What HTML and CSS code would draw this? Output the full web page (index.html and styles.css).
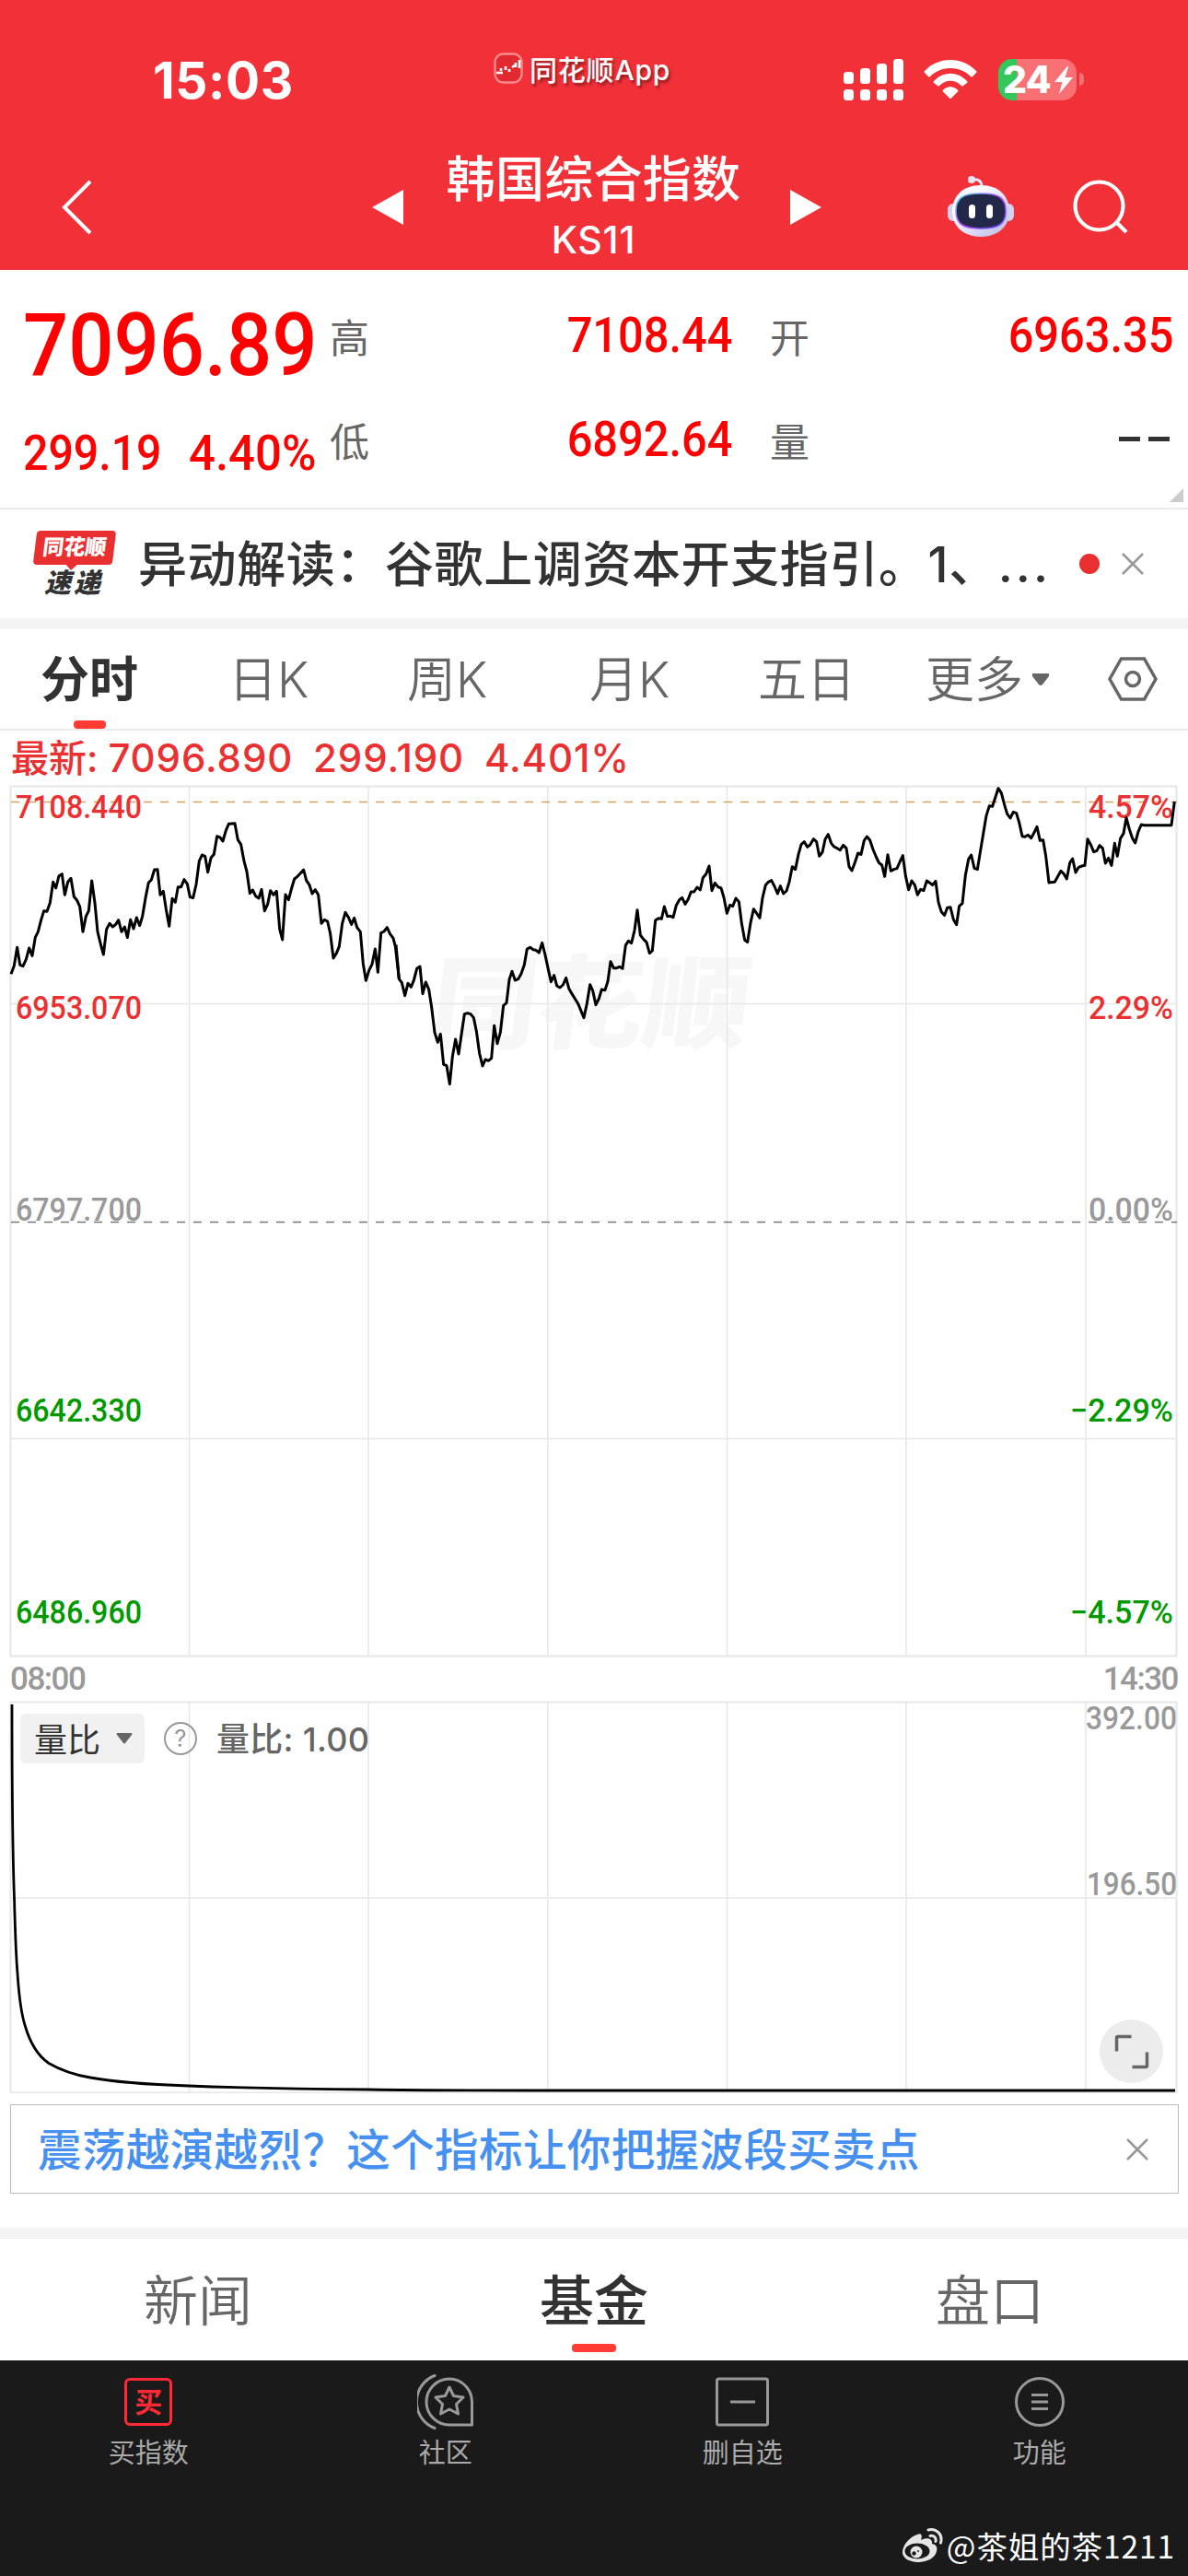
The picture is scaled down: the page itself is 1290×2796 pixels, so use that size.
FILE: index.html
```html
<!DOCTYPE html>
<html lang="zh-CN">
  <head>
    <meta charset="UTF-8" />
    <meta name="viewport" content="width=device-width, initial-scale=1.0" />
    <title>韩国综合指数 KS11</title>
    <link rel="stylesheet" href="styles.css">
  </head>
  <body>
    <header class="header">
      <div class="status-bar">
        <div class="clock">15:03</div>
        <div class="app-tag">
          <svg width="32" height="34" viewBox="0 0 32 34">
            <rect x="1.5" y="1.5" width="29" height="31" rx="9" fill="#e02a30" stroke="#fa8a8c" stroke-width="2.4" />
            <path d="M3 22h7M8 17v3M13 15v4M17 18v3M20 16l3-2M24 11v5M28 8v9" stroke="#fff" stroke-width="2.6" fill="none" />
          </svg>
          <span class="app-name">同花顺App</span>
        </div>
        <div class="status-icons">
          <svg width="66" height="46" viewBox="0 0 66 46" fill="#fff">
            <rect x="0" y="14" width="11" height="13" rx="3.5" />
            <rect x="18" y="10" width="11" height="17" rx="3.5" />
            <rect x="36" y="5" width="11" height="22" rx="3.5" />
            <rect x="54" y="0" width="11" height="27" rx="3.5" />
            <rect x="0" y="33" width="11" height="12" rx="3.5" />
            <rect x="18" y="33" width="11" height="12" rx="3.5" />
            <rect x="36" y="33" width="11" height="12" rx="3.5" />
            <rect x="54" y="33" width="11" height="12" rx="3.5" />
          </svg>
          <svg class="wifi" width="58" height="46" viewBox="0 0 58 46" fill="#fff">
            <path d="M1 13C16-3 42-3 57 13q1 1 0 2l-4 4q-1 1-2 0C39 7 19 7 7 19q-1 1-2 0l-4-4q-1-1 0-2z" />
            <path d="M11 24C21 13 37 13 47 24q1 1 0 2l-4 3q-1 1-2 0C34 22 24 22 17 29q-1 1-2 0l-4-3q-1-1 0-2z" />
            <path d="M21 33.500Q29 26.500 37 33.500q1 1 0 2L30 42.500q-1 1-2 0L21 35.500q-1-1 0-2z" />
          </svg>
          <div class="battery">
            <span>24</span>
            <svg width="20" height="30" viewBox="0 0 20 30" fill="#fff"><path d="M14 0L0 17h8.500L5 30 20 12h-8.500L15 1q0-1-1-1z" /></svg>
          </div>
          <div class="battery-cap"></div>
        </div>
      </div>
      <div class="nav-bar">
        <svg class="back" width="34" height="60" viewBox="0 0 34 60"><path d="M31 2L3 30l28 28" fill="none" stroke="#fff" stroke-width="4" /></svg>
        <svg class="prev" width="34" height="38" viewBox="0 0 34 38"><path d="M34 0v38L0 19z" fill="#fff" /></svg>
        <div class="title">
          <h1>韩国综合指数</h1>
          <p>KS11</p>
        </div>
        <svg class="next" width="34" height="38" viewBox="0 0 34 38"><path d="M0 0v38l34-19z" fill="#fff" /></svg>
        <svg class="robot" width="72" height="68" viewBox="0 0 72 68">
          <defs>
            <linearGradient id="shell" x1="0" y1="0" x2="1" y2="1">
              <stop offset="0.3" stop-color="#fbfaff" />
              <stop offset="1" stop-color="#b9b6e4" />
            </linearGradient>
            <linearGradient id="rim" x1="0" y1="0" x2="1" y2="1">
              <stop offset="0" stop-color="#4fe3f0" />
              <stop offset="0.5" stop-color="#b244f5" />
              <stop offset="1" stop-color="#4a4cf0" />
            </linearGradient>
          </defs>
          <path d="M26 5q11-2 11 8" fill="none" stroke="#e6e4f6" stroke-width="3" />
          <circle cx="26" cy="5" r="4" fill="#e6e4f6" />
          <rect x="0" y="31" width="72" height="19" rx="6" fill="#d3d1ee" />
          <path d="M36 11c20 0 31 12 31 29S53 67 36 67 5 57 5 40s11-29 31-29z" fill="url(#shell)" />
          <path d="M36 20c20 0 27 5 27 19s-8 19-27 19S9 53 9 39s7-19 27-19z" fill="#232848" stroke="url(#rim)" stroke-width="1.600" />
          <rect x="23" y="32" width="7" height="15" rx="3.500" fill="#fff" />
          <rect x="42" y="32" width="7" height="15" rx="3.500" fill="#fff" />
        </svg>
        <svg class="search" width="60" height="60" viewBox="0 0 60 60" fill="none" stroke="#fff" stroke-width="4.200">
          <circle cx="28.500" cy="28.500" r="26" />
          <path d="M47 46l11 11" />
        </svg>
      </div>
    </header>

    <section class="quote">
      <div class="quote-main">
        <div class="price"><span>7096.89</span></div>
        <div class="change"><span>299.19</span><span>4.40%</span></div>
      </div>
      <div class="quote-grid">
        <label>高</label><span class="num">7108.44</span>
        <label class="second">开</label><span class="num">6963.35</span>
        <label>低</label><span class="num">6892.64</span>
        <label class="second">量</label><span class="dashes"><i></i><i></i></span>
      </div>
      <svg class="corner" width="15" height="15" viewBox="0 0 15 15"><path d="M15 0v15H0z" fill="#ccc" /></svg>
    </section>

    <section class="news">
      <div class="news-logo">
        <div class="logo-top">同花顺</div>
        <div class="logo-bottom">速递</div>
      </div>
      <div class="news-text">异动解读：谷歌上调资本开支指引。1、<span class="dots">...</span></div>
      <div class="red-dot"></div>
      <svg width="24" height="24" viewBox="0 0 24 24"><path d="M1 1l22 22M23 1L1 23" stroke="#999" stroke-width="2.600" /></svg>
    </section>

    <nav class="tabs">
      <div class="tab active"><span>分时</span></div>
      <div class="tab"><span>日K</span></div>
      <div class="tab"><span>周K</span></div>
      <div class="tab"><span>月K</span></div>
      <div class="tab"><span>五日</span></div>
      <div class="tab"><span>更多</span><svg width="20" height="13" viewBox="0 0 20 13"><path d="M1 0h18v3l-7 9q-2 2-4 0L1 3z" fill="#666" /></svg></div>
      <svg class="setting" width="54" height="48" viewBox="0 0 54 48" fill="none" stroke="#666" stroke-width="3.500">
        <path d="M14.500 2h25L52 24 39.500 46h-25L2 24z" />
        <circle cx="27" cy="24" r="7.500" />
      </svg>
    </nav>

    <div class="latest">最新: <span>7096.890&nbsp; 299.190&nbsp; 4.401%</span></div>

    <svg class="chart" width="1290" height="965" viewBox="0 0 1290 965">
      <g class="watermark" transform="translate(464 289) skewX(-7)">
        <text x="0" y="0" textLength="346" lengthAdjust="spacingAndGlyphs">同花顺</text>
      </g>
      <g class="grid">
        <path d="M205.500 14v943M400 14v943M594.700 14v943M789.500 14v943M984 14v943M1179 14v943M11 249.500h1267M11 721.500h1267" />
        <rect x="11.500" y="13.500" width="1266" height="944" stroke-width="2.200" />
      </g>
      <path class="dash-high" d="M12 30.500h1266" />
      <path class="dash-zero" d="M12 486.500h1266" />
      <g class="axis up">
        <text x="17" y="47.500" textLength="137" lengthAdjust="spacingAndGlyphs">7108.440</text>
        <text x="17" y="266" textLength="137" lengthAdjust="spacingAndGlyphs">6953.070</text>
        <text x="1182" y="47.500" textLength="92" lengthAdjust="spacingAndGlyphs">4.57%</text>
        <text x="1182" y="266" textLength="92" lengthAdjust="spacingAndGlyphs">2.29%</text>
      </g>
      <g class="axis flat">
        <text x="17" y="484.500" textLength="137" lengthAdjust="spacingAndGlyphs">6797.700</text>
        <text x="1182" y="484.500" textLength="92" lengthAdjust="spacingAndGlyphs">0.00%</text>
      </g>
      <g class="axis down">
        <text x="17" y="703" textLength="137" lengthAdjust="spacingAndGlyphs">6642.330</text>
        <text x="17" y="921.500" textLength="137" lengthAdjust="spacingAndGlyphs">6486.960</text>
        <text x="1162" y="703" textLength="112" lengthAdjust="spacingAndGlyphs">−2.29%</text>
        <text x="1162" y="921.500" textLength="112" lengthAdjust="spacingAndGlyphs">−4.57%</text>
      </g>
      <g class="line" transform="scale(.33333)">
        <polyline points="36,652 46,625 56,565 65,622 75,626 85,604 95,567 105,592 115,532 124,514 134,475 143,446 153,448 163,420 173,352 182,372 192,332 202,326 211,394 221,352 231,340 241,400 251,412 260,432 270,514 280,464 289,446 299,348 309,420 318,514 328,555 337,588 347,506 357,487 367,498 377,490 386,476 396,514 406,498 415,533 425,475 435,504 445,468 455,494 464,464 474,404 484,354 493,345 503,312 513,311 522,394 532,382 541,440 551,496 561,406 571,418 580,368 590,368 600,344 610,358 619,401 629,404 639,360 649,284 658,264 668,268 677,320 687,274 697,262 707,203 717,207 726,219 736,184 745,163 765,161 775,215 785,230 795,284 804,318 814,389 823,378 833,398 843,405 852,376 862,446 872,424 881,380 891,394 901,382 911,505 920,540 930,393 940,410 950,372 959,342 969,334 979,323 989,312 998,347 1008,362 1017,390 1027,377 1037,394 1047,487 1057,475 1067,480 1076,520 1086,600 1096,584 1105,562 1115,487 1125,451 1135,467 1145,490 1154,469 1163,500 1174,514 1183,618 1192,673 1202,640 1212,620 1222,570 1231,646 1241,518 1251,513 1261,500 1270,520 1281,535 1288,562 1300,668" />
        <polyline transform="translate(1290)" points="0,556 10,668 19,680 29,722 39,682 49,694 58,672 68,634 78,627 87,716 97,678 107,702 116,760 126,842 136,874 145,847 155,946 165,950 175,1010 184,920 194,864 204,912 213,850 223,782 233,779 243,782 253,794 262,838 272,910 282,951 291,930 301,934 311,926 320,820 330,878 340,842 350,754 360,746 369,670 378,643 388,672 398,668 408,650 418,622 427,570 437,565 447,572 456,574 466,582 476,550 486,590 495,632 505,677 515,656 524,690 534,696 544,687 554,664 563,698 573,716 583,732 593,748 603,772 612,794 622,748 632,686 641,706 651,752 661,732 670,702 681,704 690,676 699,611 709,632 719,632 728,628 738,634 748,558 757,544 767,551 777,510 786,443 796,525 806,538 816,548 826,584 835,576 845,477 855,470 865,472 874,432 884,464 894,463 903,467 913,428 923,410 932,403 942,424 952,408 961,384 971,384 981,369 991,378 1000,338 1010,326 1020,300 1029,380 1039,355 1049,368 1059,372 1068,402 1078,454 1088,427 1097,431 1107,405 1117,416 1126,487 1136,541 1145,548 1155,485 1165,440 1175,454 1185,469 1194,404 1204,362 1213,352 1223,347 1233,366 1243,390 1252,365 1262,390 1272,381 1281,352 1291,302 1301,311" />
        <polyline transform="translate(2580)" points="1,303 11,311 21,262 30,230 40,221 50,238 59,231 70,212 80,221 89,268 99,255 108,213 118,197 128,226 137,237 147,242 157,248 167,232 177,242 186,302 195,315 205,289 215,258 225,262 235,217 244,204 254,216 264,246 274,270 283,289 293,297 302,334 312,263 322,316 332,311 342,308 352,285 361,266 370,332 380,377 390,348 400,362 409,394 419,376 429,380 439,348 448,354 458,362 468,349 477,418 487,450 497,460 506,436 516,434 526,474 536,491 545,430 555,422 565,330 575,278 584,264 594,307 604,311 614,250 623,196 633,136 643,104 653,106 662,78 672,47 682,62 692,100 701,130 711,144 721,124 731,128 740,158 750,203 759,205 769,199 779,209 788,193 798,172 808,217 818,215 827,268 837,354 856,352 866,334 876,316 886,326 895,342 905,290 914,276 924,321 934,304 944,300 954,298 963,212 973,230 983,254 993,250 1002,233 1012,242 1021,291 1031,274 1041,298 1051,226 1060,268 1070,210 1080,194 1089,143 1099,180 1109,210 1118,225 1128,188 1138,165 1148,167 1236,167 1246,90" />
      </g>
    </svg>

    <div class="times"><span>08:00</span><span>14:30</span></div>

    <div class="volume">
      <svg width="1290" height="432" viewBox="0 0 1290 432">
        <g class="grid">
          <path d="M205.500 7v425M400 7v425M594.700 7v425M789.500 7v425M984 7v425M1179 7v425M11 220h1267" />
          <rect x="11.500" y="7.500" width="1266" height="424" stroke-width="2.200" />
        </g>
        <g class="axis flat">
          <text x="1179" y="37" textLength="99" lengthAdjust="spacingAndGlyphs">392.00</text>
          <text x="1180" y="217" textLength="98" lengthAdjust="spacingAndGlyphs">196.50</text>
        </g>
        <path class="ratio-line" d="M13 10C13 90 14 180 15.500 220C16.500 258 17.500 285 19 302C20.500 325 23 345 27 358C33 379 42 392 53 399.500C66 407 80 412 98 415C125 420 160 422.500 205 424C270 426.500 330 427.500 400 428C470 429 530 429 600 429H1276" />
      </svg>
      <div class="volume-head">
        <div class="select"><span>量比</span><svg width="18" height="12" viewBox="0 0 18 12"><path d="M1 0h16q1 1 0 2l-7 9q-1 1-2 0L1 2q-1-1 0-2z" fill="#666" /></svg></div>
        <div class="help">?</div>
        <div class="ratio">量比: 1.00</div>
      </div>
      <div class="expand">
        <svg width="38" height="38" viewBox="0 0 38 38" fill="none" stroke="#666" stroke-width="3.500"><path d="M2.500 18.500V4q0-1.500 1.500-1.500h14.500M35.500 19.500V34q0 1.500-1.500 1.500H19.500" /></svg>
      </div>
    </div>

    <div class="promo">
      <span>震荡越演越烈？这个指标让你把握波段买卖点</span>
      <svg width="24" height="24" viewBox="0 0 24 24"><path d="M1 1l22 22M23 1L1 23" stroke="#999" stroke-width="2.600" /></svg>
    </div>

    <nav class="bottom-tabs">
      <div>新闻</div>
      <div class="active">基金</div>
      <div>盘口</div>
    </nav>

    <footer class="toolbar">
      <div class="tools">
        <div class="tool">
          <div class="buy-icon">买</div>
          <span>买指数</span>
        </div>
        <div class="tool">
          <svg width="62" height="60" viewBox="0 0 62 60" fill="none" stroke="#999" stroke-width="3" stroke-linejoin="round">
            <path d="M19 1.500A30.500 30.500 0 0 0 19 58.500" stroke-linecap="round" />
            <path d="M35 5a25 25 0 0 0 0 50h24.500V30A25 25 0 0 0 35 5z" />
            <path d="M35 14l4.500 9.500 10.500 1.500-7.500 7.500 2 10.500-9.500-5-9.500 5 2-10.500L20 25l10.500-1.500z" />
          </svg>
          <span>社区</span>
        </div>
        <div class="tool">
          <svg width="60" height="60" viewBox="0 0 60 60" fill="none" stroke="#999" stroke-width="3">
            <rect x="2.500" y="5" width="55" height="50" rx="2" />
            <path d="M17 30h27" />
          </svg>
          <span>删自选</span>
        </div>
        <div class="tool">
          <svg width="60" height="60" viewBox="0 0 60 60" fill="none" stroke="#999" stroke-width="3">
            <circle cx="30" cy="30" r="25.500" />
            <path d="M21 22.500h18M21 30h18M21 37.500h18" />
          </svg>
          <span>功能</span>
        </div>
      </div>
      <div class="author">
        <svg width="45" height="38" viewBox="0 0 45 38">
          <path d="M17 7c4-2 6 1 4 6 6-3 13-2 12 4 5 1 6 4 5 8-1 7-10 12-20 12S0 32 1 25C2 17 10 9 17 7z" fill="#e6e6e6" />
          <ellipse cx="17" cy="25" rx="13.500" ry="8.500" fill="#1a1a1a" />
          <circle cx="16" cy="26" r="6.500" fill="#e6e6e6" />
          <circle cx="13.500" cy="27.500" r="2.200" fill="#1a1a1a" />
          <circle cx="18" cy="25" r="1" fill="#1a1a1a" />
          <path d="M29 2c9-2 16 5 13.500 14M31 8.500c4-1 7 2 6 6" fill="none" stroke="#e6e6e6" stroke-width="3" stroke-linecap="round" />
        </svg>
        <span>@茶姐的茶1211</span>
      </div>
    </footer>
  </body>
</html>
```
FILE: styles.css
```css
* {
  box-sizing: border-box;
}
body {
  margin: 0;
  width: 1290px;
  height: 2796px;
  overflow: hidden;
  background: #fff;
  color: #323232;
  font-family: Inter, "Noto Sans CJK SC", sans-serif;
}
svg {
  display: block;
  flex-shrink: 0;
}
h1,
p {
  margin: 0;
}

/* Header */
.header {
  height: 293px;
  background: #f23038;
  color: #fff;
}
.status-bar {
  display: flex;
  height: 150px;
  padding-left: 166px;
}
.clock {
  width: 370px;
  padding-top: 55px;
  font-size: 55px;
  line-height: 64px;
  font-weight: 700;
  letter-spacing: 0.6px;
}
.app-tag {
  display: flex;
  width: 380px;
  padding-top: 57px;
  gap: 7px;
}
.app-name {
  margin-top: -1px;
  font-size: 30px;
  line-height: 40px;
  font-weight: 500;
  letter-spacing: 0.8px;
  text-shadow: 2px 3px 3px rgba(0, 0, 0, 0.4);
}
.status-icons {
  display: flex;
  padding-top: 64px;
}
.wifi {
  margin-left: 21px;
}
.battery {
  display: flex;
  align-items: center;
  width: 85px;
  height: 45px;
  margin-left: 23px;
  padding-left: 5px;
  border-radius: 15px;
  background: linear-gradient(90deg, #34c759 20px, #f87074 20px);
  font-size: 41px;
  line-height: 45px;
  font-weight: 800;
}
.battery span {
  width: 56px;
  letter-spacing: -1px;
}
.battery-cap {
  width: 5px;
  height: 14px;
  margin: 15px 0 0 3px;
  border-radius: 0 7px 7px 0;
  background: #f87074;
}
.nav-bar {
  display: flex;
  height: 143px;
  padding-left: 67px;
}
.back {
  margin-top: 45px;
}
.prev {
  margin: 56px 0 0 303px;
}
.title {
  width: 420px;
  padding-right: 7px;
  text-align: center;
}
.title h1 {
  margin-top: 13px;
  font-size: 53px;
  line-height: 64px;
  font-weight: 500;
  letter-spacing: 0.3px;
}
.title p {
  margin-top: 9px;
  font-size: 41px;
  line-height: 48px;
  font-weight: 500;
  letter-spacing: 0.8px;
}
.next {
  margin-top: 56px;
}
.robot {
  margin: 40px 0 0 137px;
}
.search {
  margin: 45px 0 0 64px;
}

/* Quote */
.quote {
  position: relative;
  display: flex;
  height: 260px;
  border-bottom: 2px solid #ececec;
  color: #f00;
}
.quote-main {
  width: 358px;
  padding: 14px 0 0 25px;
  font-family: Roboto, sans-serif;
  font-weight: 500;
  white-space: nowrap;
}
.price {
  height: 134px;
  font-size: 95px;
  line-height: 136px;
}
.price span {
  display: inline-block;
  transform: scaleX(0.912);
  transform-origin: left;
}
.change {
  display: flex;
  gap: 15px;
  font-size: 53px;
  line-height: 103px;
}
.change span {
  transform: scaleX(0.91);
  transform-origin: left;
}
.change span:last-child {
  transform: scaleX(0.96);
}
.quote-grid {
  display: grid;
  grid-template-columns: 80px 357px 80px 399px;
  grid-template-rows: 113px 113px;
  align-items: center;
  padding-top: 14px;
}
.quote-grid label {
  padding-top: 1px;
  color: #666;
  font-size: 43px;
}
.quote-grid .second {
  padding-left: 41px;
}
.num {
  justify-self: end;
  font-family: Roboto, sans-serif;
  font-size: 53px;
  font-weight: 500;
  transform: scaleX(0.92);
  transform-origin: right;
}
.dashes {
  display: flex;
  gap: 9px;
  justify-self: end;
  margin-right: 4px;
}
.dashes i {
  width: 23px;
  height: 5px;
  background: #323232;
}
.corner {
  position: absolute;
  right: 5px;
  bottom: 6px;
}

/* News */
.news {
  display: flex;
  align-items: center;
  height: 130px;
  padding-left: 38px;
  border-bottom: 12px solid #f4f4f4;
}
.news-logo {
  width: 112px;
  font-weight: 900;
  font-style: italic;
  text-align: center;
}
.logo-top {
  position: relative;
  width: 86px;
  height: 37px;
  border-radius: 4px;
  background: #ea2f30;
  color: #fff;
  font-size: 23px;
  line-height: 37px;
  transform: skewX(-7deg);
  font-style: normal;
}
.logo-top::after {
  content: "";
  position: absolute;
  left: 36px;
  top: 37px;
  border: 6px solid transparent;
  border-top-color: #ea2f30;
  border-bottom: 0;
}
.logo-bottom {
  width: 84px;
  margin-top: 4px;
  font-size: 29px;
  line-height: 32px;
  letter-spacing: 3px;
}
.news-text {
  width: 1022px;
  padding-top: 1px;
  font-size: 53px;
  font-weight: 500;
  line-height: 64px;
  letter-spacing: 0.6px;
  white-space: nowrap;
}
.dots {
  letter-spacing: 3px;
}
.red-dot {
  width: 22px;
  height: 22px;
  margin-right: 24px;
  border-radius: 50%;
  background: #ea2f30;
}

/* Period tabs */
.tabs {
  display: flex;
  align-items: center;
  height: 110px;
  padding-left: 44px;
  border-bottom: 2px solid #ececec;
  color: #666;
  font-size: 53px;
  font-weight: 350;
}
.tab {
  display: flex;
  align-items: center;
  position: relative;
  width: 190px;
  height: 108px;
}
.tab span {
  padding-bottom: 6px;
}
.tab:nth-child(1) {
  width: 204px;
}
.tab:nth-child(2) {
  width: 194px;
}
.tab:nth-child(3) {
  width: 198px;
}
.tab:nth-child(4) {
  width: 183px;
}
.tab:nth-child(5) {
  width: 182px;
}
.tab:nth-child(6) {
  width: 198px;
}
.tab svg {
  margin-left: 9px;
}
.tab.active {
  color: #323232;
  font-weight: 700;
}
.tab.active::after {
  content: "";
  position: absolute;
  left: 36px;
  bottom: 0;
  width: 35px;
  height: 9px;
  border-radius: 4px;
  background: #ff3b33;
}

/* Price chart */
.latest {
  height: 47px;
  padding: 4px 0 0 12px;
  color: #ea3030;
  font-size: 41px;
  line-height: 52px;
  font-weight: 500;
  white-space: nowrap;
}
.latest span {
  font-size: 42px;
  letter-spacing: 0.9px;
  word-spacing: -1.2px;
}
.chart {
  height: 965px;
}
.watermark text {
  fill: #f7f7f7;
  font-size: 110px;
  font-weight: 900;
}
.grid {
  fill: none;
  stroke: #e8e8e8;
  stroke-width: 1.6;
}
.dash-high {
  stroke: #d6a260;
  stroke-width: 1.5;
  stroke-dasharray: 9 9;
}
.dash-zero {
  stroke: #777;
  stroke-width: 1.5;
  stroke-dasharray: 9 9;
}
.axis {
  font-family: Roboto, sans-serif;
  font-size: 35px;
  font-weight: 500;
}
.up {
  fill: #ea3030;
}
.flat {
  fill: #999;
}
.down {
  fill: #009900;
}
.line {
  fill: none;
  stroke: #000;
  stroke-width: 9;
  stroke-linejoin: round;
}
.times {
  display: flex;
  justify-content: space-between;
  height: 35px;
  padding: 0 11px;
  color: #999;
  font-family: Roboto, sans-serif;
  font-size: 35px;
  line-height: 35px;
  font-weight: 500;
  letter-spacing: -1.5px;
}

/* Volume ratio chart */
.volume {
  position: relative;
  height: 432px;
}
.ratio-line {
  fill: none;
  stroke: #000;
  stroke-width: 2.8;
}
.volume-head {
  position: absolute;
  left: 22px;
  top: 19px;
  display: flex;
  align-items: center;
  font-size: 36px;
}
.select {
  display: flex;
  align-items: center;
  gap: 17px;
  width: 135px;
  height: 54px;
  padding-left: 15px;
  border-radius: 6px;
  background: #f1f1f1;
}
.select span {
  padding-bottom: 3px;
}
.help {
  width: 36px;
  height: 36px;
  margin: 0 21px;
  border: 2.5px solid #999;
  border-radius: 50%;
  color: #999;
  font-size: 26px;
  line-height: 31px;
  text-align: center;
}
.ratio {
  padding-bottom: 4px;
  color: #666;
  font-weight: 500;
  letter-spacing: 0.3px;
}
.expand {
  position: absolute;
  right: 27px;
  top: 352px;
  padding: 15.5px;
  border-radius: 50%;
  background: #ececec;
}

.promo {
  display: flex;
  align-items: center;
  justify-content: space-between;
  height: 97px;
  margin: 12px 10px 37px 11px;
  padding: 0 32px 0 29px;
  border: 1.5px solid #bbb;
  color: #4590f0;
  font-size: 47.5px;
  font-weight: 500;
  letter-spacing: 0.4px;
}
.promo span {
  padding-bottom: 4px;
}

/* Bottom */
.bottom-tabs {
  display: flex;
  height: 144px;
  border-top: 12px solid #f4f4f4;
  color: #666;
  font-size: 59px;
  font-weight: 350;
  line-height: 135px;
  text-align: center;
}
.bottom-tabs div {
  position: relative;
  flex: 1;
}
.bottom-tabs .active {
  color: #323232;
  font-weight: 500;
}
.bottom-tabs .active::after {
  content: "";
  position: absolute;
  left: 191px;
  bottom: 9px;
  width: 48px;
  height: 9px;
  border-radius: 4px;
  background: #ff3b33;
}
.toolbar {
  display: flex;
  flex-direction: column;
  justify-content: space-between;
  height: 234px;
  padding: 15px 14px 12px 0;
  background: #1a1a1a;
}
.tools {
  display: flex;
  width: 1290px;
}
.tool {
  display: flex;
  flex: 1;
  flex-direction: column;
  align-items: center;
  color: #aaa;
  font-size: 29px;
  line-height: 40px;
}
.tool span {
  margin-top: 6px;
}
.buy-icon {
  width: 52px;
  height: 52px;
  margin: 4px 0;
  border: 3px solid #ff2a35;
  border-radius: 6px;
  color: #ff2a35;
  font-size: 30px;
  line-height: 46px;
  font-weight: 700;
  text-align: center;
}
.author {
  display: flex;
  align-items: center;
  justify-content: flex-end;
  gap: 4px;
  color: #fff;
  font-family: "Noto Sans CJK SC", sans-serif;
  font-size: 33.5px;
  line-height: 42px;
  letter-spacing: 0.9px;
}
```
